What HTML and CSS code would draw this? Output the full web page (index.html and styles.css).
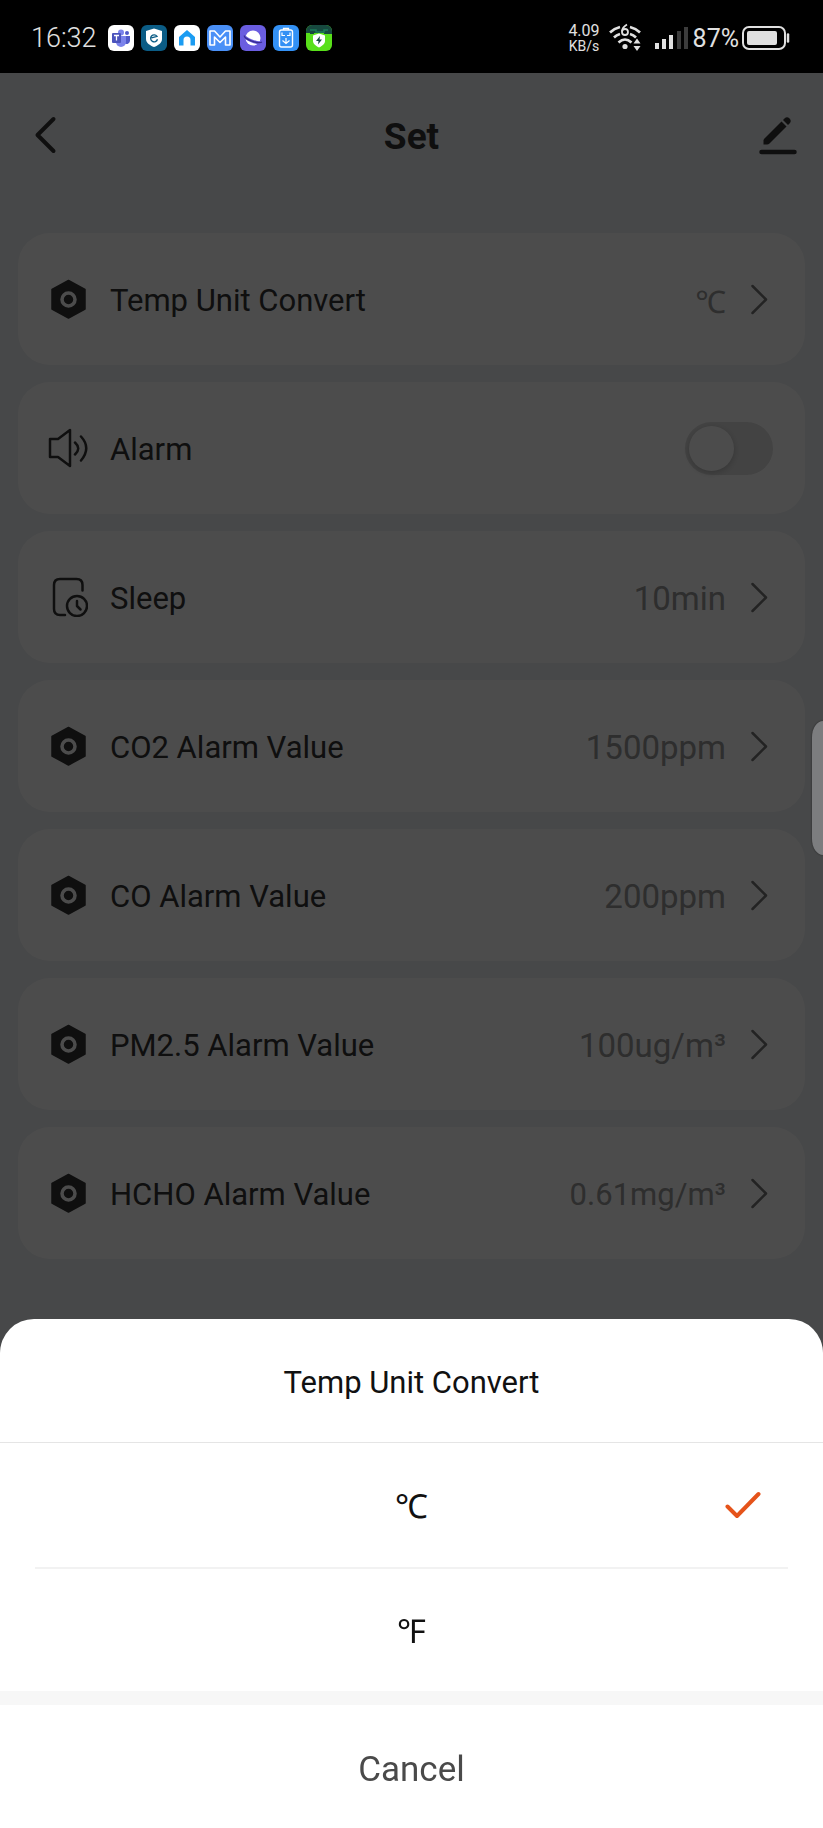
FILE: index.html
```html
<!DOCTYPE html>
<html lang="en">
<head>
    <meta charset="UTF-8">
    <meta name="viewport" content="width=device-width, initial-scale=1.0">
    <title>Set</title>
    <link rel="stylesheet" href="styles.css">
</head>
<body>

<!-- shared icons -->
<svg class="sprite" aria-hidden="true">
    <symbol id="hex" viewBox="0 0 40 40">
        <path d="M20.500 1.500 L37 10.500 V30 L20.500 39 L4 30 V10.500Z" fill="#333" stroke="#333" stroke-width="1.500" stroke-linejoin="round"/>
        <circle cx="20.500" cy="20.500" r="6.500" fill="none" stroke="#fff" stroke-width="3.500"/>
    </symbol>
    <symbol id="next" viewBox="0 0 29 32">
        <path d="M8.500 3 L22 16.500 L8.500 30" fill="none" stroke="#777" stroke-width="2.500" stroke-linecap="round" stroke-linejoin="round"/>
    </symbol>
</svg>

<div class="status-bar">
    <span class="time">16:32</span>
    <div class="apps">
        <svg viewBox="0 0 26 26">
            <rect width="26" height="26" rx="6" fill="#fff"/>
            <circle cx="13" cy="7.500" r="3" fill="#7b83eb"/>
            <circle cx="19" cy="8" r="2" fill="#5059c9"/>
            <path d="M16 11h6v5a3.500 3.500 0 0 1-6 2z" fill="#5059c9"/>
            <path d="M8 11h10v6a5 5 0 0 1-10 0z" fill="#7b83eb"/>
            <rect x="4" y="8" width="9" height="10" rx="1" fill="#4b53bc"/>
            <path d="M6 10.500h5M8.500 10.500v5" stroke="#fff" stroke-width="1.300"/>
        </svg>
        <svg viewBox="0 0 26 26">
            <rect width="26" height="26" rx="6" fill="#0b5c85"/>
            <path d="M13 3.500l8 2.500v8c0 4-4 6.500-8 8-4-1.500-8-4-8-8V6z" fill="#fff"/>
            <path d="M10.500 12.800l5.500-1.500a3.500 3.500 0 1 0 .5 3" fill="none" stroke="#0b5c85" stroke-width="1.300"/>
        </svg>
        <svg viewBox="0 0 26 26">
            <rect width="26" height="26" rx="6" fill="#fff"/>
            <path d="M13 5l8 7v8.500h-4.500V15a3.500 3.500 0 0 0-7 0v5.500H5V12z" fill="#1b9cf2"/>
        </svg>
        <svg viewBox="0 0 26 26">
            <rect width="26" height="26" rx="6" fill="#4a90f7"/>
            <path d="M3 20V6h4.500l5.500 6 5.500-6H23v14h-4.500v-8L13 17.500 7.500 12v8z" fill="none" stroke="#fff" stroke-width="1.600" stroke-linejoin="round"/>
        </svg>
        <svg viewBox="0 0 26 26">
            <rect width="26" height="26" rx="6" fill="#6a5de0"/>
            <circle cx="13" cy="13" r="7.500" fill="#fff"/>
            <path d="M5 10.500c-2 3 14 9 16.500 6.500" fill="none" stroke="#6a5de0" stroke-width="3"/>
            <path d="M4.500 10.500c-2 3 14 9 17.500 6.500" fill="none" stroke="#382c91" stroke-width="1.300"/>
        </svg>
        <svg viewBox="0 0 26 26">
            <rect width="26" height="26" rx="6" fill="#3391f5"/>
            <path d="M10.500 5V3.500h5V5" fill="none" stroke="#fff" stroke-width="1.300"/>
            <rect x="6.500" y="5" width="13" height="17" rx="2" fill="none" stroke="#fff" stroke-width="1.400"/>
            <path d="M9 7.500v3h3M17 7.500v3h-3M9.500 15.500l3.500 3 3.500-3M13 13v5" fill="none" stroke="#fff" stroke-width="1.200"/>
        </svg>
        <svg viewBox="0 0 26 26">
            <rect width="26" height="26" rx="6" fill="#59e01a"/>
            <path d="M0 8V6a6 6 0 0 1 6-6h14a6 6 0 0 1 6 6v3h-8V8H8v1H4V8z" fill="#17493f"/>
            <path d="M4 5h6v2h8V5h4" fill="none" stroke="#1c7a5a" stroke-width="1.500"/>
            <path d="M13 8.500l6 2v5.500c0 3-3 5-6 6.500-3-1.500-6-3.500-6-6.500v-5.500z" fill="#fff"/>
            <path d="M14 11l-4 5h2.500l-.5 3.500 4-5h-2.500z" fill="#17493f"/>
        </svg>
    </div>
    <div class="speed"><span class="rate">4.09</span><span class="unit">KB/s</span></div>
    <svg class="wifi" viewBox="0 0 32 30">
        <g fill="none" stroke="#e0e0e0" stroke-width="2.600">
            <path d="M1 9.500Q5 5.500 11 4M21 4q6 1.500 10 5.500"/>
            <path d="M5 14.500q2.500-2.500 6-3.500M21 11q3.500 1 6 3.500"/>
            <path d="M9.500 19.500q6.500-6 13 0"/>
            <path d="M18 1.500q-5 3-5 7" stroke-width="1.800"/>
            <circle cx="16" cy="9" r="3" stroke-width="1.800"/>
        </g>
        <circle cx="16" cy="23.500" r="2.600" fill="#e0e0e0"/>
        <path d="M24.500 20.500l3.500-5 3.500 5zM24.500 23l3.500 5 3.500-5z" fill="#e0e0e0"/>
    </svg>
    <svg class="signal" viewBox="0 0 34 22">
        <path d="M0 16h4v6H0zM7 12h4v10H7zM14 8h4v14h-4z" fill="#e0e0e0"/>
        <path d="M22 4h4v18h-4zM29 0h4v22h-4z" fill="#3c3c3c"/>
    </svg>
    <span class="percent">87%</span>
    <svg class="battery" viewBox="0 0 48 24">
        <rect x="1" y="1" width="42" height="22" rx="6" fill="none" stroke="#e0e0e0" stroke-width="2"/>
        <rect x="5" y="5" width="30" height="14" rx="2" fill="#e0e0e0"/>
        <path d="M46 8.500v7" stroke="#e0e0e0" stroke-width="2.500" stroke-linecap="round"/>
    </svg>
</div>

<header class="header">
    <button class="icon-button" aria-label="Back">
        <svg viewBox="0 0 40 40"><path d="M28.500 4 L12.500 20 L28.500 36" fill="none" stroke="#333" stroke-width="4" stroke-linecap="round" stroke-linejoin="round"/></svg>
    </button>
    <h1>Set</h1>
    <button class="icon-button" aria-label="Edit">
        <svg viewBox="0 0 40 40">
            <path d="M3.500 37h33" stroke="#333" stroke-width="4.500" stroke-linecap="round"/>
            <path d="M23.500 6.500l5 5L11.500 28.500q-1 1-2.500 1H5.500V25.500q0-1 1-2z" fill="#333"/>
            <path d="M25 5l1.500-1.500a3.500 3.500 0 0 1 5 5L30 10z" fill="#333"/>
        </svg>
    </button>
</header>

<main class="list">
    <button class="card">
        <svg class="icon"><use href="#hex"/></svg>
        <span class="name">Temp Unit Convert</span>
        <span class="value degree">℃</span>
        <svg class="next"><use href="#next"/></svg>
    </button>
    <label class="card">
        <svg class="icon" viewBox="0 0 40 40" fill="none" stroke="#333" stroke-width="2.500" stroke-linecap="round" stroke-linejoin="round">
            <path d="M2 11h8L22 2v36L10 29H2z"/>
            <path d="M27 14.500q6.500 6 0 12M33 8.500q10.500 11.500 0 24"/>
        </svg>
        <span class="name">Alarm</span>
        <input type="checkbox" class="switch">
    </label>
    <button class="card">
        <svg class="icon" viewBox="0 0 40 40" fill="none" stroke="#333" stroke-width="2.500" stroke-linecap="round" stroke-linejoin="round">
            <path d="M34.500 13.500V8q0-6-6-6H12q-6 0-6 6v24q0 6 6 6H17"/>
            <circle cx="29" cy="29" r="10"/>
            <path d="M29 24v5l3.500 3.500"/>
        </svg>
        <span class="name">Sleep</span>
        <span class="value">10min</span>
        <svg class="next"><use href="#next"/></svg>
    </button>
    <button class="card">
        <svg class="icon"><use href="#hex"/></svg>
        <span class="name">CO2 Alarm Value</span>
        <span class="value">1500ppm</span>
        <svg class="next"><use href="#next"/></svg>
    </button>
    <button class="card">
        <svg class="icon"><use href="#hex"/></svg>
        <span class="name">CO Alarm Value</span>
        <span class="value">200ppm</span>
        <svg class="next"><use href="#next"/></svg>
    </button>
    <button class="card">
        <svg class="icon"><use href="#hex"/></svg>
        <span class="name">PM2.5 Alarm Value</span>
        <span class="value">100ug/m³</span>
        <svg class="next"><use href="#next"/></svg>
    </button>
    <button class="card">
        <svg class="icon"><use href="#hex"/></svg>
        <span class="name">HCHO Alarm Value</span>
        <span class="value long">0.61mg/m³</span>
        <svg class="next"><use href="#next"/></svg>
    </button>
</main>

<div class="overlay">
    <div class="edge-handle"></div>
    <form class="sheet" role="dialog" aria-labelledby="sheet-title">
        <h2 id="sheet-title">Temp Unit Convert</h2>
        <label class="option">
            <input type="radio" name="unit" checked>
            <span class="degree">℃</span>
            <svg class="check" viewBox="0 0 36 28"><path d="M2.500 15.500L12 25 33.500 3" fill="none" stroke="#e5531a" stroke-width="4" stroke-linecap="round" stroke-linejoin="round"/></svg>
        </label>
        <label class="option">
            <input type="radio" name="unit">
            <span class="degree">℉</span>
            <svg class="check" viewBox="0 0 36 28"><path d="M2.500 15.500L12 25 33.500 3" fill="none" stroke="#e5531a" stroke-width="4" stroke-linecap="round" stroke-linejoin="round"/></svg>
        </label>
        <button type="button" class="cancel">Cancel</button>
    </form>
</div>

</body>
</html>
```
FILE: styles.css
```css
* {
    box-sizing: border-box;
}
body {
    margin: 0;
    min-height: 100vh;
    background-color: #edf0f3;
    color: #333;
    font-family: Roboto, "Noto Sans CJK SC", sans-serif;
}
button {
    border: none;
    background: none;
    padding: 0;
    font: inherit;
    color: inherit;
    cursor: pointer;
}
svg {
    display: block;
    flex: none;
}
.sprite {
    display: none;
}

/* status bar */
.status-bar {
    display: flex;
    align-items: center;
    height: 73px;
    padding: 3px 33px 0 31px;
    background-color: #000;
    color: #e0e0e0;
}
.time {
    font-size: 27px;
    font-weight: 300;
}
.apps {
    display: flex;
    gap: 7px;
    margin-left: 11px;
    margin-right: auto;
}
.apps svg {
    width: 26px;
    height: 26px;
}
.speed {
    display: flex;
    flex-direction: column;
    align-items: center;
}
.rate {
    font-size: 16px;
    line-height: 16px;
}
.unit {
    font-size: 14px;
    line-height: 14px;
}
.wifi {
    width: 32px;
    height: 30px;
    margin-left: 9px;
}
.signal {
    width: 34px;
    height: 22px;
    margin-left: 14px;
}
.percent {
    margin-left: 4px;
    font-size: 25px;
}
.battery {
    width: 48px;
    height: 24px;
    margin-left: 3px;
}

/* title row */
.header {
    display: flex;
    align-items: center;
    justify-content: space-between;
    height: 124px;
    padding: 0 25px;
}
.header h1 {
    margin: 0;
    padding-top: 3px;
    font-size: 37px;
    font-weight: 700;
}
.icon-button svg {
    width: 40px;
    height: 40px;
}

/* settings */
.list {
    display: flex;
    flex-direction: column;
    gap: 17px;
    padding: 36px 18px;
}
.card {
    display: flex;
    align-items: center;
    height: 132px;
    padding: 0 32px 0 30px;
    border-radius: 32px;
    background-color: #fff;
    text-align: left;
}
.icon {
    width: 40px;
    height: 40px;
}
.name {
    flex: 1;
    margin-left: 22px;
    padding-top: 3px;
    font-size: 31px;
}
.value {
    padding-top: 3px;
    font-size: 33px;
    color: #999;
}
.value.long,
.value.degree {
    font-size: 31px;
}
.degree {
    font-family: "Noto Sans", sans-serif;
}
.next {
    width: 29px;
    height: 32px;
    margin-left: 18px;
}
.switch {
    appearance: none;
    width: 88px;
    height: 53px;
    margin: 0;
    padding: 4px;
    border-radius: 27px;
    background-color: #e0e0e0;
}
.switch::before {
    content: "";
    display: block;
    width: 45px;
    height: 45px;
    border-radius: 50%;
    background-color: #fff;
    box-shadow: 0 2px 6px rgba(0, 0, 0, 0.2);
}
.switch:checked::before {
    margin-left: auto;
}

/* bottom sheet */
.overlay {
    position: fixed;
    inset: 73px 0 0;
    display: flex;
    flex-direction: column;
    justify-content: flex-end;
    background-color: rgba(0, 0, 0, 0.7);
}
.edge-handle {
    position: absolute;
    top: 648px;
    right: 0;
    width: 11px;
    height: 134px;
    border-radius: 11px 0 0 11px / 16px 0 0 16px;
    background-color: #7c7d7f;
    box-shadow: 0 0 2px #222;
}
.sheet {
    border-radius: 34px 34px 0 0;
    background-color: #fff;
    color: #111;
}
.sheet h2 {
    margin: 0;
    padding-top: 5px;
    border-bottom: 1px solid #e5e5e5;
    font-size: 31px;
    font-weight: 400;
    line-height: 118px;
    text-align: center;
}
.option {
    display: grid;
    grid-template-columns: 36px 1fr 36px;
    align-items: center;
    height: 124px;
    margin: 0 35px;
    padding: 0 27px;
    font-size: 33px;
    text-align: center;
}
.option + .option {
    border-top: 2px solid #f2f2f2;
}
.option input {
    appearance: none;
    margin: 0;
}
.check {
    width: 36px;
    height: 28px;
    visibility: hidden;
}
.option input:checked ~ .check {
    visibility: visible;
}
.cancel {
    width: 100%;
    height: 137px;
    padding-top: 5px;
    border-top: 14px solid #f7f7f7;
    font-size: 35px;
    color: #4a4a4a;
}
```
